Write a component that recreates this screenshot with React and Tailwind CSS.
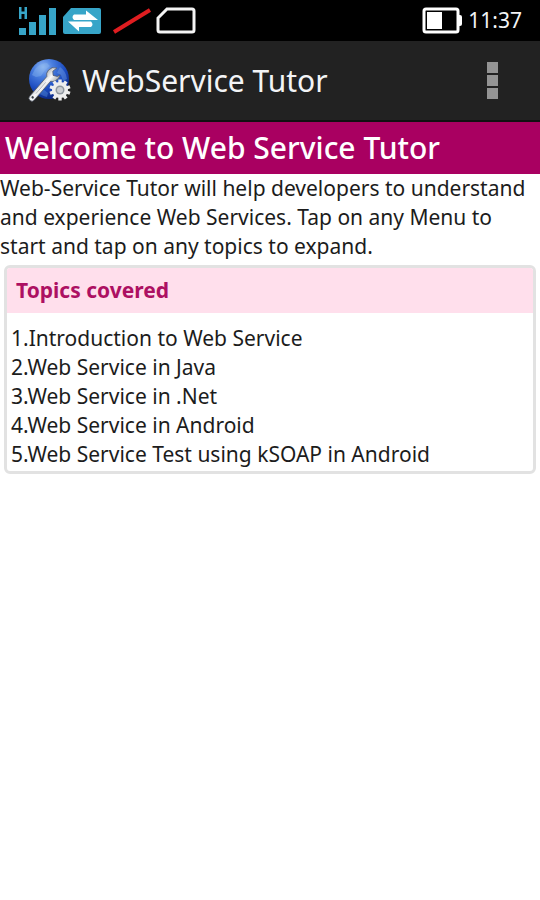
const topics = [
  "Introduction to Web Service",
  "Web Service in Java",
  "Web Service in .Net",
  "Web Service in Android",
  "Web Service Test using kSOAP in Android",
];

const SignalIcon = () => (
  <svg width="40" height="32" viewBox="0 0 40 32" fill="#37a5c8" aria-hidden="true">
    <path d="M1 2h2.500v4.500h3V2H9v12H6.500V9h-3v5H1z" />
    <rect x="1" y="23" width="7" height="7" />
    <rect x="11" y="17" width="7" height="13" />
    <rect x="21" y="10" width="7" height="20" />
    <rect x="31" y="3" width="7" height="27" />
  </svg>
);

const DataIcon = () => (
  <svg width="40" height="26" viewBox="0 0 40 26" aria-hidden="true">
    <path d="M9 0H37Q39 0 39 2V24Q39 26 37 26H3Q1 26 1 24V9z" fill="#37a5c8" />
    <path d="M12 6.500H24V2.500L36 12H12Q9 9 12 6.500zM29 19H17V23.500L6 13.500H29Q32 16.500 29 19z" fill="#fff" />
  </svg>
);

const NoSignalIcon = () => (
  <svg width="40" height="26" viewBox="0 0 40 26" aria-hidden="true">
    <path d="M2 24L38 2" stroke="#df1d20" strokeWidth="4" />
  </svg>
);

const SimIcon = () => (
  <svg width="40" height="28" viewBox="0 0 40 28" aria-hidden="true">
    <path
      d="M11 2H36Q38 2 38 4V23Q38 25 36 25H4Q2 25 2 23V11z"
      fill="none"
      stroke="#f4f4f4"
      strokeWidth="3"
    />
  </svg>
);

const BatteryIcon = () => (
  <svg width="40" height="28" viewBox="0 0 40 28" aria-hidden="true">
    <rect x="2" y="2" width="34" height="23" rx="2" fill="none" stroke="#fff" strokeWidth="3" />
    <rect x="5" y="5" width="15" height="17" fill="#fff" />
    <path d="M37 8H38Q40 8 40 10V17Q40 19 38 19H37z" fill="#fff" />
  </svg>
);

const teeth = [0, 36, 72, 108, 144, 180, 216, 252, 288, 324];

const AppIcon = () => (
  <svg width="44" height="44" viewBox="0 0 44 44" aria-hidden="true">
    <defs>
      <radialGradient id="globe" cx="0.35" cy="0.2" r="0.8">
        <stop offset="0" stopColor="#8fb6f2" />
        <stop offset="0.3" stopColor="#4a7fe0" />
        <stop offset="0.7" stopColor="#1c4cc0" />
        <stop offset="1" stopColor="#0c2a88" />
      </radialGradient>
      <linearGradient id="steel" x1="0" y1="0" x2="1" y2="0">
        <stop offset="0" stopColor="#b9bcc0" />
        <stop offset="0.5" stopColor="#fafafa" />
        <stop offset="1" stopColor="#aeb1b5" />
      </linearGradient>
    </defs>
    <circle cx="21" cy="20" r="20" fill="url(#globe)" />
    <path d="M7 10Q12 4 19 4L22 7L17 11L13 17L8 18L4 16z" fill="#8db9ee" opacity="0.4" />
    <path d="M32 8Q38 12 39 20L35 22L33 16L29 14z" fill="#86b2ea" opacity="0.35" />
    <path d="M11 26L15 30L20 34L19 38Q12 36 8 32z" fill="#5b96e0" opacity="0.4" />
    <g transform="translate(25 15) rotate(41)">
      <path
        d="M-1 -7L-2 -2L1 1L5 -1L6 -4Q8 0 6 4Q5 6 3 7L3 32Q3 35 0 35Q-3 35 -3 32L-3 6Q-6 4 -6 0Q-6 -5 -1 -7z"
        fill="url(#steel)"
        stroke="#4c5563"
        strokeWidth="0.7"
      />
      <path d="M0 11V26" stroke="#a7abb0" strokeWidth="0.8" />
      <circle cx="0" cy="31" r="1.200" fill="#343a42" />
    </g>
    <g transform="translate(32 31)">
      {teeth.map((angle) => (
        <rect key={angle} x="-1.700" y="-10.500" width="3.400" height="5" fill="#ededed" transform={`rotate(${angle})`} />
      ))}
      <circle r="8" fill="#ededed" />
      <circle r="4.500" fill="#8f969f" />
      <circle r="3" fill="#c9ccd0" />
    </g>
  </svg>
);

const StatusBar = () => (
  <div className="flex h-[41px] items-center justify-between bg-black px-[18px]">
    <div className="flex items-center gap-1">
      <SignalIcon />
      <DataIcon />
      <div className="flex items-center gap-1 pl-1.5">
        <NoSignalIcon />
        <SimIcon />
      </div>
    </div>
    <div className="flex items-center gap-1.5 text-[21px] text-gray-100">
      <BatteryIcon />
      <time>11:37</time>
    </div>
  </div>
);

const TitleBar = () => (
  <header className="flex h-[81px] items-center justify-between border-b-2 border-[#111111] bg-[#222222] pl-7 pr-10">
    <div className="flex items-center gap-[10px]">
      <AppIcon />
      <span className="text-[30px] leading-10 text-gray-100">WebService Tutor</span>
    </div>
    <button type="button" aria-label="More options" className="flex flex-col gap-[2px] p-0.5">
      <span className="size-[11px] bg-[#949494]" />
      <span className="size-[11px] bg-[#949494]" />
      <span className="size-[11px] bg-[#949494]" />
    </button>
  </header>
);

const App = () => {
  return (
    <div className="min-h-screen bg-white font-['Noto_Sans',sans-serif] text-[21px] leading-[29px] text-[#1c1c1c]">
      <StatusBar />
      <TitleBar />
      <main>
        <h1 className="bg-[#a90061] px-[5px] py-1.5 text-[30px] font-medium leading-10 text-white">
          Welcome to Web Service Tutor
        </h1>
        <p>
          Web-Service Tutor will help developers to understand and experience Web Services. Tap on
          any Menu to start and tap on any topics to expand.
        </p>
        <section className="mx-1 mt-1 overflow-hidden rounded-md border-3 border-[#e2e2e2]">
          <h2 className="bg-[#ffdfec] px-[9px] py-2 font-bold text-[#ad1062]">Topics covered</h2>
          <ol className="px-1 pb-0.5 pt-[11px]">
            {topics.map((topic, i) => (
              <li key={topic}>
                {i + 1}.{topic}
              </li>
            ))}
          </ol>
        </section>
      </main>
    </div>
  );
};

export default App;
